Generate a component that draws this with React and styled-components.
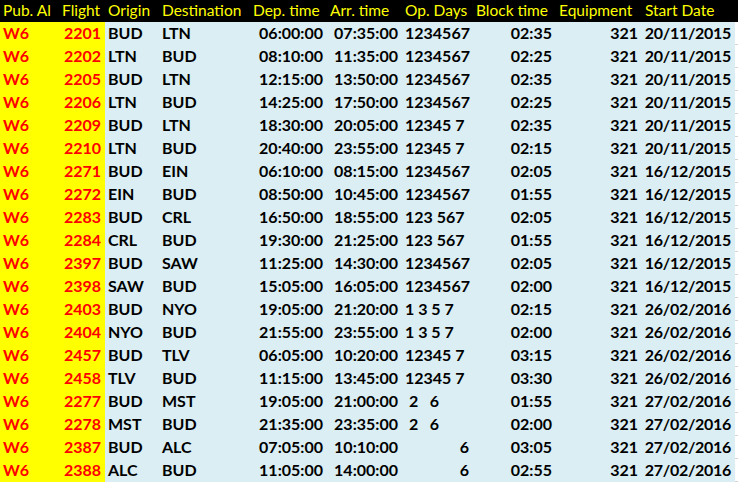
import React from "react";
import styled, { createGlobalStyle } from "styled-components";

const Global = createGlobalStyle`
  html, body { margin: 0; padding: 0; background: #ffffff; }
  body { width: 738px; height: 482px; overflow: hidden; }
`;

const COLS = "59px 46px 54px 91px 77px 75px 71px 83px 86px 93px 3px";

const Sheet = styled.div`
  display: flex;
  flex-direction: column;
  width: 738px;
  font-family: Lato, "Open Sans", sans-serif;
`;

const Row = styled.div`
  display: grid;
  grid-template-columns: ${COLS};
  height: ${(p) => (p.$header ? "22px" : "23px")};
  background: ${(p) => (p.$header ? "#000000" : "#daeef3")};
`;

const Cell = styled.div`
  display: flex;
  align-items: flex-end;
  justify-content: ${(p) => (p.$right ? "flex-end" : "flex-start")};
  padding: ${(p) => (p.$header ? "0 2px 4px 3px" : "0 4px 4px 3px")};
  line-height: 1;
  white-space: pre;
  overflow: hidden;
  font-size: ${(p) => (p.$header ? "15.5px" : "16px")};
  font-weight: ${(p) => (p.$header ? 400 : 700)};
  letter-spacing: ${(p) => (p.$tight ? "-0.3px" : "normal")};
  color: ${(p) => p.$color || "#000000"};
  background: ${(p) => p.$bg || "transparent"};
`;

const Edge = styled.div`
  background: ${(p) => (p.$header ? "#000000" : "#ffffff")};
  border-bottom: ${(p) => (p.$header ? "none" : "1px solid #d4d4d4")};
  box-sizing: border-box;
`;

const headers = [
  "Pub. Al",
  "Flight",
  "Origin",
  "Destination",
  "Dep. time",
  "Arr. time",
  "Op. Days",
  "Block time",
  "Equipment",
  "Start Date",
];

const rows = [
  ["2201", "BUD", "LTN", "06:00:00", "07:35:00", "1234567", "02:35", "20/11/2015"],
  ["2202", "LTN", "BUD", "08:10:00", "11:35:00", "1234567", "02:25", "20/11/2015"],
  ["2205", "BUD", "LTN", "12:15:00", "13:50:00", "1234567", "02:35", "20/11/2015"],
  ["2206", "LTN", "BUD", "14:25:00", "17:50:00", "1234567", "02:25", "20/11/2015"],
  ["2209", "BUD", "LTN", "18:30:00", "20:05:00", "12345 7", "02:35", "20/11/2015"],
  ["2210", "LTN", "BUD", "20:40:00", "23:55:00", "12345 7", "02:15", "20/11/2015"],
  ["2271", "BUD", "EIN", "06:10:00", "08:15:00", "1234567", "02:05", "16/12/2015"],
  ["2272", "EIN", "BUD", "08:50:00", "10:45:00", "1234567", "01:55", "16/12/2015"],
  ["2283", "BUD", "CRL", "16:50:00", "18:55:00", "123 567", "02:05", "16/12/2015"],
  ["2284", "CRL", "BUD", "19:30:00", "21:25:00", "123 567", "01:55", "16/12/2015"],
  ["2397", "BUD", "SAW", "11:25:00", "14:30:00", "1234567", "02:05", "16/12/2015"],
  ["2398", "SAW", "BUD", "15:05:00", "16:05:00", "1234567", "02:00", "16/12/2015"],
  ["2403", "BUD", "NYO", "19:05:00", "21:20:00", "1 3 5 7", "02:15", "26/02/2016"],
  ["2404", "NYO", "BUD", "21:55:00", "23:55:00", "1 3 5 7", "02:00", "26/02/2016"],
  ["2457", "BUD", "TLV", "06:05:00", "10:20:00", "12345 7", "03:15", "26/02/2016"],
  ["2458", "TLV", "BUD", "11:15:00", "13:45:00", "12345 7", "03:30", "26/02/2016"],
  ["2277", "BUD", "MST", "19:05:00", "21:00:00", " 2   6", "01:55", "27/02/2016"],
  ["2278", "MST", "BUD", "21:35:00", "23:35:00", " 2   6", "02:00", "27/02/2016"],
  ["2387", "BUD", "ALC", "07:05:00", "10:10:00", "6", "03:05", "27/02/2016"],
  ["2388", "ALC", "BUD", "11:05:00", "14:00:00", "6", "02:55", "27/02/2016"],
];

export default function App() {
  return (
    <>
      <Global />
      <Sheet>
        <Row $header>
          {headers.map((h) => (
            <Cell key={h} $header $color="#ffff00">
              {h}
            </Cell>
          ))}
          <Edge $header />
        </Row>
        {rows.map((r) => {
          const [flight, orig, dest, dep, arr, days, block, start] = r;
          const numericDays = days === "6";
          return (
            <Row key={flight}>
              <Cell $bg="#ffff00" $color="#ff0000">W6</Cell>
              <Cell $bg="#ffff00" $color="#ff0000" $right>
                {flight}
              </Cell>
              <Cell>{orig}</Cell>
              <Cell>{dest}</Cell>
              <Cell $right>{dep}</Cell>
              <Cell $right>{arr}</Cell>
              <Cell $right={numericDays}>{days}</Cell>
              <Cell $right>{block}</Cell>
              <Cell $right>321</Cell>
              <Cell $right $tight>
                {start}
              </Cell>
              <Edge />
            </Row>
          );
        })}
      </Sheet>
    </>
  );
}
